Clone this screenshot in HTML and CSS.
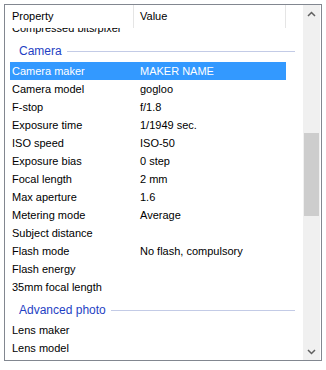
FILE: index.html
```html
<!DOCTYPE html>
<html>
<head>
<meta charset="utf-8">
<link rel="stylesheet" href="styles.css">
</head>
<body>
<div class="view">
  <div class="pane">
    <div class="header">
      <div class="hcell h1">Property</div>
      <div class="hcell h2">Value</div>
      <div class="hcell h3"></div>
    </div>
    <div class="body">
      <div class="rows">
        <div class="row"><span class="c1">Compressed bits/pixel</span><span class="c2"></span></div>
        <div class="group"><span class="gname">Camera</span><i class="rule"></i></div>
        <div class="row sel"><span class="c1">Camera maker</span><span class="c2">MAKER NAME</span></div>
        <div class="row"><span class="c1">Camera model</span><span class="c2">gogloo</span></div>
        <div class="row"><span class="c1">F-stop</span><span class="c2">f/1.8</span></div>
        <div class="row"><span class="c1">Exposure time</span><span class="c2">1/1949 sec.</span></div>
        <div class="row"><span class="c1">ISO speed</span><span class="c2">ISO-50</span></div>
        <div class="row"><span class="c1">Exposure bias</span><span class="c2">0 step</span></div>
        <div class="row"><span class="c1">Focal length</span><span class="c2">2 mm</span></div>
        <div class="row"><span class="c1">Max aperture</span><span class="c2">1.6</span></div>
        <div class="row"><span class="c1">Metering mode</span><span class="c2">Average</span></div>
        <div class="row"><span class="c1">Subject distance</span><span class="c2"></span></div>
        <div class="row"><span class="c1">Flash mode</span><span class="c2">No flash, compulsory</span></div>
        <div class="row"><span class="c1">Flash energy</span><span class="c2"></span></div>
        <div class="row"><span class="c1">35mm focal length</span><span class="c2"></span></div>
        <div class="group"><span class="gname">Advanced photo</span><i class="rule"></i></div>
        <div class="row"><span class="c1">Lens maker</span><span class="c2"></span></div>
        <div class="row"><span class="c1">Lens model</span><span class="c2"></span></div>
      </div>
    </div>
  </div>
  <div class="scrollbar">
    <div class="arrow">
      <svg width="9" height="6" viewBox="0 0 9 6"><path d="M1 5 L4.5 1.5 L8 5" fill="none" stroke="#606060" stroke-width="1.5"/></svg>
    </div>
    <div class="track">
      <div class="thumb"></div>
    </div>
    <div class="arrow">
      <svg width="9" height="6" viewBox="0 0 9 6"><path d="M1 1 L4.5 4.5 L8 1" fill="none" stroke="#606060" stroke-width="1.5"/></svg>
    </div>
  </div>
</div>
</body>
</html>
```
FILE: styles.css
```css
html, body {
  margin: 0;
  padding: 0;
  background: #ffffff;
}
body {
  padding: 4px;
  font-family: "Liberation Sans", Arial, sans-serif;
  font-size: 11px;
  color: #000000;
}
.view {
  box-sizing: border-box;
  width: 318px;
  height: 357px;
  border: 1px solid #828790;
  display: flex;
  background: #ffffff;
}
.pane {
  width: 298px;
  display: flex;
  flex-direction: column;
  overflow: hidden;
}
.header {
  height: 23px;
  display: flex;
  flex: none;
  background: #ffffff;
}
.hcell {
  box-sizing: border-box;
  height: 23px;
  line-height: 23px;
  white-space: nowrap;
}
.h1 {
  width: 129px;
  padding-left: 7px;
  border-right: 1px solid #e5e5e5;
}
.h2 {
  width: 152px;
  padding-left: 6px;
  border-right: 1px solid #e5e5e5;
}
.h3 {
  flex: 1;
}
.body {
  flex: 1;
  overflow: hidden;
}
.rows {
  margin-top: -9px;
}
.row {
  box-sizing: border-box;
  height: 18px;
  line-height: 18px;
  margin-left: 5px;
  width: 276px;
  display: flex;
  white-space: nowrap;
}
.c1 {
  box-sizing: border-box;
  width: 130px;
  padding-left: 2px;
  overflow: hidden;
}
.c2 {
  flex: 1;
}
.sel {
  background: #3399ff;
  color: #ffffff;
}
.group {
  box-sizing: border-box;
  height: 25px;
  padding-top: 3px;
  padding-left: 14px;
  padding-right: 8px;
  display: flex;
  align-items: center;
}
.gname {
  color: #1f3fc4;
  font-size: 12px;
  white-space: nowrap;
}
.rule {
  flex: 1;
  height: 1px;
  margin-left: 5px;
  background: #c3cbe6;
}
.scrollbar {
  width: 17px;
  flex: none;
  background: #f0f0f0;
  display: flex;
  flex-direction: column;
}
.arrow {
  height: 17px;
  display: flex;
  align-items: center;
  justify-content: center;
  flex: none;
}
.track {
  flex: 1;
  padding-top: 111px;
}
.thumb {
  margin-left: 1px;
  width: 15px;
  height: 83px;
  background: #cdcdcd;
}
```
